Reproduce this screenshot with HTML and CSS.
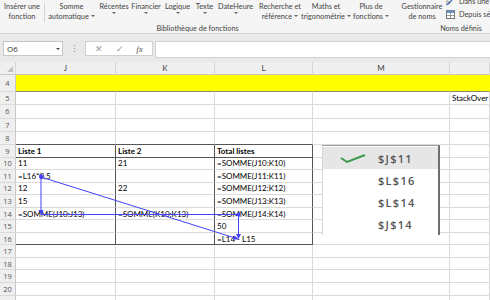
FILE: index.html
```html
<!DOCTYPE html>
<html lang="fr">
<head>
<meta charset="UTF-8">
<title>Classeur - Formules</title>
<link rel="stylesheet" href="styles.css">
</head>
<body>
<div class="ribbon">
  <div class="group group-lib">
    <div class="buttons">
      <div class="btn w-ins"><span>Insérer une</span><span>fonction</span></div>
      <div class="vsep"></div>
      <div class="btn w-somme"><span>Somme</span><span>automatique <i class="dd"></i></span></div>
      <div class="btn w-rec"><span>Récentes</span><span><i class="dd"></i></span></div>
      <div class="btn w-fin"><span>Financier</span><span><i class="dd"></i></span></div>
      <div class="btn w-log"><span>Logique</span><span><i class="dd"></i></span></div>
      <div class="btn w-txt"><span>Texte</span><span><i class="dd"></i></span></div>
      <div class="btn w-date"><span>DateHeure</span><span><i class="dd"></i></span></div>
      <div class="btn w-rech"><span>Recherche et</span><span>référence <i class="dd"></i></span></div>
      <div class="btn w-math"><span>Maths et</span><span>trigonométrie <i class="dd"></i></span></div>
      <div class="btn w-plus"><span>Plus de</span><span>fonctions <i class="dd"></i></span></div>
    </div>
    <div class="group-label">Bibliothèque de fonctions</div>
  </div>
  <div class="gsep"></div>
  <div class="group group-names">
    <div class="buttons">
      <div class="btn w-gest"><span>Gestionnaire</span><span>de noms</span></div>
      <div class="small-btns">
        <div class="small">
          <svg width="9" height="9" viewBox="0 0 9 9"><path d="M1 8 L6 3" stroke="#2f6fb5" stroke-width="1.2"/><text x="0" y="7" font-size="6" font-style="italic" fill="#555" font-family="Liberation Serif">fx</text></svg>
          <span>Dans une formule</span>
        </div>
        <div class="small">
          <svg width="9" height="9" viewBox="0 0 9 9"><rect x="0.5" y="0.5" width="8" height="8" fill="#fff" stroke="#777"/><rect x="0.5" y="0.5" width="8" height="2.5" fill="#6a8fc0"/><path d="M0.5 5.5 H8.5 M4.5 3 V8.5" stroke="#999" stroke-width="1"/></svg>
          <span>Depuis sélection</span>
        </div>
      </div>
    </div>
    <div class="group-label">Noms définis</div>
  </div>
</div>

<div class="fbar">
  <div class="namebox"><span>O6</span><i class="dd"></i></div>
  <div class="grip">⋮</div>
  <div class="fbtns">
    <span class="fx-x">✕</span>
    <span class="fx-ok">✓</span>
    <span class="fx-f">fx</span>
  </div>
  <div class="finput"></div>
</div>

<div class="sheet">
  <div class="row colhead">
    <div class="corner"><i class="tri"></i></div>
    <div>J</div><div>K</div><div>L</div><div>M</div><div></div>
  </div>
  <div class="row r-tall yellow">
    <div class="rh">4</div><div></div><div></div><div></div><div></div><div></div>
  </div>
  <div class="row r-mid">
    <div class="rh">5</div><div></div><div></div><div></div><div></div><div>StackOver</div>
  </div>
  <div class="row r-mid">
    <div class="rh">6</div><div></div><div></div><div></div><div></div><div></div>
  </div>
  <div class="row r-mid">
    <div class="rh">7</div><div></div><div></div><div></div><div></div><div></div>
  </div>
  <div class="row r-mid">
    <div class="rh">8</div><div class="bb"></div><div class="bb"></div><div class="bb"></div><div></div><div></div>
  </div>
  <div class="row">
    <div class="rh">9</div><div class="br bb bold">Liste 1</div><div class="br bb bold">Liste 2</div><div class="br bb bold">Total listes</div><div></div><div></div>
  </div>
  <div class="row">
    <div class="rh">10</div><div class="br">11</div><div class="br">21</div><div class="br">=SOMME(J10:K10)</div><div></div><div></div>
  </div>
  <div class="row">
    <div class="rh">11</div><div class="br">=L16*0,5</div><div class="br"></div><div class="br">=SOMME(J11:K11)</div><div></div><div></div>
  </div>
  <div class="row">
    <div class="rh">12</div><div class="br">12</div><div class="br">22</div><div class="br">=SOMME(J12:K12)</div><div></div><div></div>
  </div>
  <div class="row">
    <div class="rh">13</div><div class="br">15</div><div class="br"></div><div class="br">=SOMME(J13:K13)</div><div></div><div></div>
  </div>
  <div class="row">
    <div class="rh">14</div><div class="br">=SOMME(J10:J13)</div><div class="br">=SOMME(K10:K13)</div><div class="br">=SOMME(J14:K14)</div><div></div><div></div>
  </div>
  <div class="row">
    <div class="rh">15</div><div class="br"></div><div class="br"></div><div class="br">50</div><div></div><div></div>
  </div>
  <div class="row">
    <div class="rh">16</div><div class="br bb"></div><div class="br bb"></div><div class="br bb">=L14 - L15</div><div></div><div></div>
  </div>
  <div class="row">
    <div class="rh">17</div><div></div><div></div><div></div><div></div><div></div>
  </div>
  <div class="row">
    <div class="rh">18</div><div></div><div></div><div></div><div></div><div></div>
  </div>
  <div class="row">
    <div class="rh">19</div><div></div><div></div><div></div><div></div><div></div>
  </div>
  <div class="row">
    <div class="rh">20</div><div></div><div></div><div></div><div></div><div></div>
  </div>
  <div class="row">
    <div class="rh"></div><div></div><div></div><div></div><div></div><div></div>
  </div>
</div>

<svg class="arrows" width="490" height="300" viewBox="0 0 490 300">
  <g stroke="#4242ff" stroke-width="1" fill="#4242ff">
    <line x1="41" y1="177" x2="41" y2="211"/>
    <line x1="41" y1="177" x2="235" y2="238"/>
    <line x1="41" y1="214.5" x2="238" y2="214.5"/>
    <line x1="238.5" y1="214" x2="238.5" y2="235"/>
    <ellipse cx="41" cy="176.5" rx="2" ry="2.5" stroke="none"/>
    <ellipse cx="238.5" cy="214.5" rx="2" ry="2" stroke="none"/>
    <polygon points="38.5,210 43.5,210 41,215" stroke="none"/>
    <polygon points="236,234 241,234 238.5,239" stroke="none"/>
    <polygon points="239,239.5 233,239.5 234.5,235.5" stroke="none"/>
  </g>
</svg>

<div class="goto-list">
  <div class="goto-item active">
    <svg class="check" width="26" height="10" viewBox="0 0 26 10"><polyline points="1,4 7,8 25,1" fill="none" stroke="#3c9a4c" stroke-width="2"/></svg>
    <span>$J$11</span>
  </div>
  <div class="goto-item"><span>$L$16</span></div>
  <div class="goto-item"><span>$L$14</span></div>
  <div class="goto-item"><span>$J$14</span></div>
</div>
</body>
</html>
```

FILE: styles.css
```css
:root {
    --grid: #dadada;
    --head-bg: #efefef;
    --head-line: #c8c8c8;
    --dark: #555;
    --ribbon-text: #444;
}

body {
    margin: 0;
    width: 490px;
    height: 300px;
    overflow: hidden;
    position: relative;
    background: #fff;
    font-family: 'Open Sans', sans-serif;
}

/* ribbon */

.ribbon {
    display: flex;
    height: 33px;
    background: #f5f5f5;
    border-bottom: 1px solid #d6d6d6;
    color: var(--ribbon-text);
    font-family: Lato, sans-serif;
    font-size: 7.3px;
    overflow: hidden;
}

.group {
    display: flex;
    flex-direction: column;
}

.group-lib {
    width: 396px;
}

.buttons {
    display: flex;
    height: 24px;
}

.btn {
    display: flex;
    flex-direction: column;
    align-items: center;
    padding-top: 2px;
    line-height: 9.5px;
    white-space: nowrap;
}

.btn span {
    display: flex;
    align-items: center;
    gap: 2px;
}

.w-ins { width: 44px; }
.w-somme { width: 53px; }
.w-rec { width: 32px; }
.w-fin { width: 32px; }
.w-log { width: 31px; }
.w-txt { width: 23px; }
.w-date { width: 39px; }
.w-rech { width: 50px; }
.w-math { width: 42px; }
.w-plus { width: 48px; }
.w-gest { width: 46px; }

.dd {
    display: inline-block;
    width: 0;
    height: 0;
    border-left: 2px solid transparent;
    border-right: 2px solid transparent;
    border-top: 2px solid #666;
}

.vsep {
    width: 1px;
    margin: 3px 0 2px;
    background: #d4d4d4;
}

.gsep {
    width: 1px;
    margin: 2px 1px 2px 0;
    background: #d4d4d4;
}

.group-label {
    text-align: center;
    line-height: 9px;
}

.group-names {
    flex: 1;
    padding-left: 3px;
}

.group-names .group-label {
    width: 124px;
}

.small-btns {
    display: flex;
    flex-direction: column;
    margin-top: -5px;
    padding-left: 1px;
}

.small {
    display: flex;
    align-items: center;
    gap: 4px;
    height: 13px;
    white-space: nowrap;
}

/* formula bar */

.fbar {
    display: flex;
    align-items: flex-start;
    height: 28px;
    padding-top: 7px;
    box-sizing: border-box;
    background: #e9e9e9;
    font-size: 8px;
    color: #333;
}

.namebox {
    display: flex;
    align-items: center;
    justify-content: space-between;
    width: 60px;
    height: 15px;
    margin-left: 3px;
    padding: 0 2px 0 3px;
    box-sizing: border-box;
    background: #fff;
    border: 1px solid #c6c6c6;
}

.namebox .dd {
    border-top-color: #444;
    border-left-width: 2.5px;
    border-right-width: 2.5px;
    border-top-width: 2.5px;
}

.grip {
    width: 22px;
    text-align: center;
    line-height: 15px;
    color: #888;
    font-size: 9px;
}

.fbtns {
    display: flex;
    align-items: center;
    justify-content: space-around;
    width: 68px;
    height: 15px;
    padding: 0 3px;
    box-sizing: border-box;
    background: #fff;
    border: 1px solid #d0d0d0;
    color: #999;
    font-size: 9px;
}

.fx-f {
    font-family: 'Liberation Serif', serif;
    font-style: italic;
    color: #555;
}

.finput {
    flex: 1;
    height: 15px;
    margin-left: 2px;
    background: #fff;
    border: 1px solid #d0d0d0;
    border-right: 0;
}

/* sheet */

.sheet {
    font-family: Lato, sans-serif;
    font-size: 8px;
    color: #000;
}

.row {
    display: grid;
    grid-template-columns: 16px 100px 99px 98px 137px 1fr;
    height: 12.56px;
}

.row > div {
    box-sizing: border-box;
    border-right: 1px solid var(--grid);
    border-bottom: 1px solid var(--grid);
    padding-left: 2px;
    white-space: nowrap;
    overflow: hidden;
    display: flex;
    align-items: center;
}

.r-mid { height: 13.25px; }
.r-tall { height: 17px; }

.colhead {
    height: 13px;
}

.colhead > div {
    justify-content: center;
    padding: 0;
    background: var(--head-bg);
    border-right-color: #d6d6d6;
    border-bottom-color: var(--head-line);
    color: #444;
}

.corner {
    position: relative;
}

.tri {
    position: absolute;
    right: 2px;
    bottom: 2px;
    width: 0;
    height: 0;
    border-left: 6px solid transparent;
    border-bottom: 6px solid #c2c2c2;
}

.row > .rh {
    justify-content: center;
    padding: 0;
    background: var(--head-bg);
    border-right-color: var(--head-line);
    color: #555;
    font-family: 'Open Sans', sans-serif;
    font-size: 7.5px;
}

.yellow > div:not(.rh) {
    background: #ffff00;
    border-right-color: #ffff00;
    border-bottom-color: #8a8a60;
}

.row > .br { border-right-color: var(--dark); }
.row > .bb { border-bottom-color: var(--dark); }
.bold { font-weight: bold; }

/* trace arrows and goto list overlays */

.arrows {
    position: absolute;
    left: 0;
    top: 0;
    pointer-events: none;
}

.goto-list {
    position: absolute;
    left: 322px;
    top: 145px;
    width: 118px;
    height: 90px;
    box-sizing: border-box;
    background: #fff;
    border-top: 1px solid #9a9a9a;
    border-left: 1px solid #d8d8d8;
    border-right: 2px solid #6f6f6f;
    padding-top: 1px;
}

.goto-item {
    display: flex;
    align-items: center;
    height: 22px;
    padding-left: 55px;
    position: relative;
    font-family: 'Open Sans', sans-serif;
    font-weight: 600;
    font-size: 11px;
    letter-spacing: 1.3px;
    color: #555;
}

.goto-item.active {
    background: #e6e6e6;
}

.check {
    position: absolute;
    left: 17px;
    top: 7px;
}
```
